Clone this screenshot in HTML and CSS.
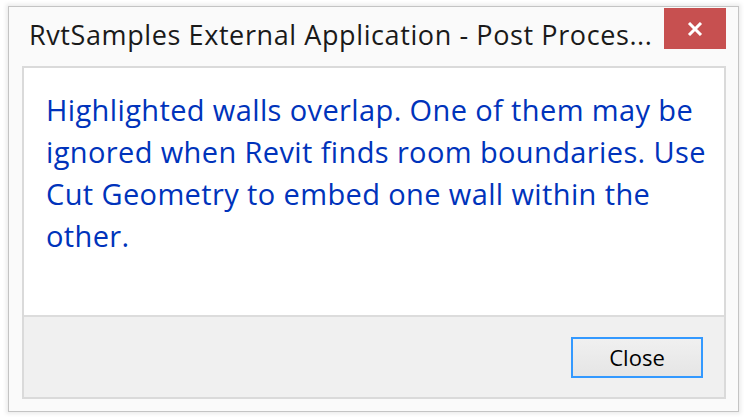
FILE: index.html
```html
<!DOCTYPE html>
<html>
<head>
<meta charset="utf-8">
<link rel="stylesheet" href="styles.css">
</head>
<body>
<div class="window">
  <div class="titlebar">
    <div class="title">RvtSamples External Application - Post Proces...</div>
    <div class="close-x">
      <svg width="16" height="14" viewBox="0 0 16 14"><path d="M2 1 L14 13 M14 1 L2 13" stroke="#fff" stroke-width="3" fill="none"/></svg>
    </div>
  </div>
  <div class="panel">
    <div class="content">
      <p class="message">Highlighted walls overlap. One of them may be<br>ignored when Revit finds room boundaries. Use<br>Cut Geometry to embed one wall within the<br>other.</p>
    </div>
    <div class="footer">
      <button class="btn">Close</button>
    </div>
  </div>
</div>
</body>
</html>
```
FILE: styles.css
```css
html, body {
  margin: 0;
  padding: 0;
  background: #ffffff;
}
body {
  width: 746px;
  height: 418px;
  overflow: hidden;
  font-family: "Open Sans", "Noto Sans", sans-serif;
}
.window {
  margin: 6px 0 0 8px;
  border: 1px solid #c4c4c4;
  background: #fafafa;
  box-shadow: 0 0 4px 2px rgba(0,0,0,0.08);
  display: flex;
  flex-direction: column;
  padding: 0 12px 12px 13px;
  box-sizing: content-box;
  width: 704px;
  height: 392px;
}
.titlebar {
  height: 59px;
  display: flex;
  align-items: flex-start;
  justify-content: space-between;
}
.title {
  font-size: 27px;
  letter-spacing: 0.6px;
  color: #1a1a1a;
  margin-top: 10px;
  margin-left: 7px;
  line-height: 36px;
  white-space: nowrap;
}
.close-x {
  width: 62px;
  height: 41px;
  margin-top: 1px;
  background: #c75050;
  display: flex;
  align-items: center;
  justify-content: center;
}
.panel {
  flex: 1;
  border: 2px solid #dadada;
  display: flex;
  flex-direction: column;
}
.content {
  flex: 1;
  background: #ffffff;
  padding: 21px 0 0 22px;
}
.message {
  margin: 0;
  color: #0033bb;
  font-size: 29px;
  letter-spacing: 0.38px;
  line-height: 42px;
  white-space: nowrap;
}
.footer {
  height: 80px;
  border-top: 2px solid #dcdcdc;
  background: #f0f0f0;
  display: flex;
  align-items: center;
  justify-content: flex-end;
  padding-right: 21px;
}
.btn {
  width: 132px;
  height: 41px;
  border: 2px solid #3399ff;
  background: linear-gradient(#f0f0f0, #e5e5e5);
  font-family: "Open Sans", "Noto Sans", sans-serif;
  font-size: 22px;
  color: #000;
  padding: 0;
}
```
